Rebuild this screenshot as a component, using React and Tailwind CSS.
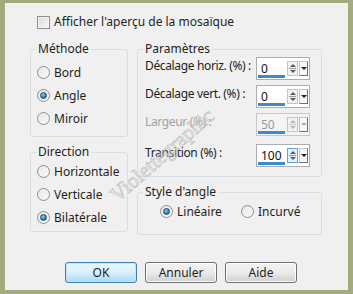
import React from "react";

const FONT = { fontFamily: '"Noto Sans", "Open Sans", sans-serif' };

function Radio({ checked }) {
  return (
    <span className="relative flex h-[13px] w-[13px] items-center justify-center rounded-full border border-[#8e8f8f] bg-gradient-to-br from-[#e8e8e8] to-[#f8f8f8]">
      {checked && (
        <span className="h-[7px] w-[7px] rounded-full border border-[#1b4f7a] bg-[radial-gradient(circle_at_40%_35%,#8fd0f5,#2a7bb6_60%,#16507f)]" />
      )}
    </span>
  );
}

function RadioRow({ label, checked, className = "" }) {
  return (
    <div className={`flex h-[23px] items-center gap-[4px] ${className}`}>
      <Radio checked={checked} />
      <span className="text-[12px] leading-[16px] text-[#1e1e1e]">{label}</span>
    </div>
  );
}

function Spin({ value, disabled, active }) {
  return (
    <div
      className={`relative flex h-[23px] w-[54px] shrink-0 items-center border ${
        disabled ? "border-[#c8c8c8] bg-[#f4f4f4]" : "border-[#abadb3] bg-white"
      }`}
    >
      <span className={`ml-[4px] flex-1 text-[12px] leading-[16px] ${disabled ? "text-[#9a9a9a]" : "text-[#111]"}`}>
        {value}
      </span>
      <div
        className={`mr-[1px] flex h-[15px] w-[11px] flex-col items-center justify-center gap-[1px] border ${
          active ? "border-[#6aa3d3] bg-[#e4f1fb]" : "border-[#c4c4c4] bg-[#f2f2f2]"
        }`}
      >
        <span className={`h-0 w-0 border-x-[3px] border-b-[3px] border-x-transparent ${disabled ? "border-b-[#b8b8b8]" : "border-b-[#5a5a5a]"}`} />
        <span className={`h-[1px] w-[7px] ${disabled ? "bg-[#c8c8c8]" : "bg-[#9a9a9a]"}`} />
        <span className={`h-0 w-0 border-x-[3px] border-t-[3px] border-x-transparent ${disabled ? "border-t-[#b8b8b8]" : "border-t-[#5a5a5a]"}`} />
      </div>
      <div className="mr-[1px] flex h-[15px] w-[9px] items-center justify-center border border-[#c4c4c4] border-r-[#707070] border-b-[#707070] bg-[#f7f7f7]">
        <span className={`h-0 w-0 border-x-[3px] border-t-[3px] border-x-transparent ${disabled ? "border-t-[#b0b0b0]" : "border-t-[#222]"}`} />
      </div>
      <span className="absolute bottom-[1px] left-[1px] h-[3px] w-[27px] bg-[#3d8bcf]" />
    </div>
  );
}

function ParamRow({ label, value, disabled, active, className = "" }) {
  return (
    <div className={`flex h-[23px] items-start justify-between ${className}`}>
      <span
        className={`whitespace-nowrap pt-[1px] text-[12px] leading-[16px] tracking-[-0.35px] ${
          disabled ? "text-[#a3a3a3]" : "text-[#1e1e1e]"
        }`}
      >
        {label}
      </span>
      <Spin value={value} disabled={disabled} active={active} />
    </div>
  );
}

function Group({ title, className = "", children }) {
  return (
    <fieldset className={`rounded-[3px] border border-[#d5dfe5] ${className}`}>
      <legend className="ml-[5px] px-[2px] text-[12px] leading-[16px] text-[#1e1e1e]">{title}</legend>
      {children}
    </fieldset>
  );
}

function Button({ label, primary }) {
  return (
    <button
      className={`h-[21px] w-[72px] rounded-[3px] border text-[12px] leading-[16px] text-[#1e1e1e] ${
        primary
          ? "border-[#3c7fb1] bg-gradient-to-b from-[#eaf6fd] via-[#d9f0fc] to-[#a7d9f5] shadow-[inset_0_0_0_1px_#c4e5f6]"
          : "border-[#707070] bg-gradient-to-b from-[#f2f2f2] via-[#ebebeb] to-[#cfcfcf] shadow-[inset_0_0_0_1px_#fcfcfc]"
      }`}
    >
      {label}
    </button>
  );
}

export default function App() {
  return (
    <div className="h-[294px] w-[353px] bg-[#a3ab7d] pb-[4px] pl-[5px] pr-[5px] pt-[3px]" style={FONT}>
      <div className="relative h-[287px] w-[343px] overflow-hidden bg-[#f0f0f0]">
        <div className="flex items-center gap-[4px] pl-[32px] pt-[11px]">
          <span className="h-[13px] w-[13px] border border-[#8e8f8f] bg-gradient-to-br from-[#dcdcdc] to-[#f6f6f6] shadow-[inset_0_0_0_1px_#f4f4f4]" />
          <span className="text-[12px] leading-[16px] text-[#1e1e1e]">Afficher l'aperçu de la mosaïque</span>
        </div>

        <div className="mt-[11px] flex gap-[9px] pl-[25px]">
          <div className="flex w-[98px] flex-col gap-[7px]">
            <Group title="Méthode" className="h-[96px]">
              <div className="pl-[6px] pt-[4px]">
                <RadioRow label="Bord" />
                <RadioRow label="Angle" checked />
                <RadioRow label="Miroir" />
              </div>
            </Group>
            <Group title="Direction" className="h-[88px]">
              <div className="pl-[6px]">
                <RadioRow label="Horizontale" />
                <RadioRow label="Verticale" />
                <RadioRow label="Bilatérale" checked />
              </div>
            </Group>
          </div>

          <div className="flex w-[185px] flex-col gap-[7px]">
            <Group title="Paramètres" className="h-[136px]">
              <div className="pl-[7px] pr-[11px]">
                <ParamRow label="Décalage horiz. (%) :" value="0" />
                <ParamRow label="Décalage vert. (%) :" value="0" className="mt-[5px]" />
                <ParamRow label="Largeur (%) :" value="50" disabled className="mt-[5px]" />
                <ParamRow label="Transition (%) :" value="100" active className="mt-[8px]" />
              </div>
            </Group>
            <Group title="Style d'angle" className="h-[51px]">
              <div className="flex items-center pl-[22px]">
                <RadioRow label="Linéaire" checked className="w-[81px]" />
                <RadioRow label="Incurvé" />
              </div>
            </Group>
          </div>
        </div>

        <div className="mt-[27px] flex gap-[8px] pl-[60px]">
          <Button label="OK" primary />
          <Button label="Annuler" />
          <Button label="Aide" />
        </div>

        <div
          className="pointer-events-none absolute left-[74px] top-[139px] h-[26px] w-[166px] -rotate-[41deg] text-center text-[21px] leading-[26px] text-transparent [-webkit-text-stroke:0.7px_#c2c2c2]"
          style={{ fontFamily: '"Liberation Serif", serif' }}
        >
          Violettegraphic
        </div>
      </div>
    </div>
  );
}
